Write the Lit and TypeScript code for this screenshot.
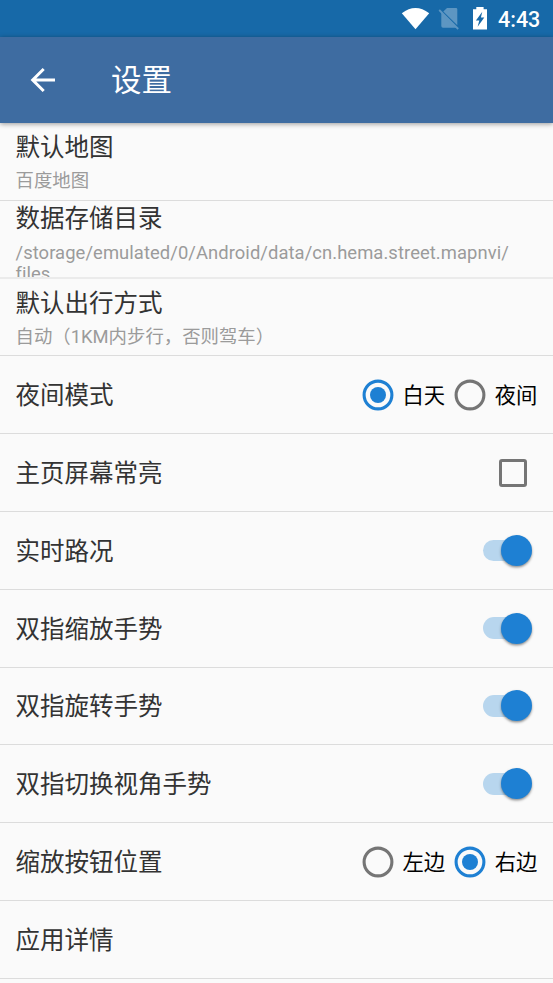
import { LitElement, html, css, svg } from "lit";
import { customElement, property } from "lit/decorators.js";

@customElement("radio-option")
class RadioOption extends LitElement {
  @property() label = "";
  @property({ type: Boolean }) checked = false;
  static styles = css`
    :host { display: flex; align-items: center; width: 92.3px; height: 48px; }
    .ring { width: 32px; height: 32px; flex: none; color: #757575; }
    .ring.on { color: #1e80d3; }
    .label { margin-left: 8.5px; padding-top: 2px; font-size: 21.3px; line-height: 32px; color: #000; white-space: nowrap; }
  `;
  render() {
    return html`<svg class="ring ${this.checked ? "on" : ""}" viewBox="0 0 32 32">
        <circle cx="16" cy="16" r="13.9" fill="none" stroke="currentColor" stroke-width="3.1"></circle>
        ${this.checked ? svg`<circle cx="16" cy="16" r="8" fill="currentColor"></circle>` : ""}
      </svg><span class="label">${this.label}</span>`;
  }
}

@customElement("toggle-switch")
class ToggleSwitch extends LitElement {
  static styles = css`
    :host { display: flex; align-items: center; width: 43.6px; height: 21.6px; margin-left: auto; margin-right: 26px;
      border-radius: 11px; background: #b8d6ee; justify-content: flex-end; }
    .thumb { width: 31px; height: 31px; flex: none; margin-right: -5.3px; border-radius: 50%; background: #1e80d3;
      box-shadow: 0 1.5px 2.5px rgba(0, 0, 0, .42); }
  `;
  render() {
    return html`<span class="thumb"></span>`;
  }
}

@customElement("setting-row")
class SettingRow extends LitElement {
  @property() label = "";
  @property() detail: unknown = "";
  @property({ type: Boolean }) long = false;
  static styles = css`
    :host { display: flex; box-sizing: border-box; height: 77.8px; flex: none; align-items: center;
      border-bottom: 1px solid #dcdcdc; overflow: hidden; }
    :host([long]) { border-bottom: 2px solid #ebebeb; }
    .text { flex: none; margin-left: 15.5px; padding-top: 3px; }
    .title { font-size: 24.5px; line-height: 36px; color: #333; white-space: nowrap; }
    .detail { font-size: 18.4px; line-height: 22px; margin-top: 4px; color: #9b9b9b; }
    .double { align-self: flex-start; padding-top: 7px; }
    .long { align-self: flex-start; padding-top: 0; width: 507px; }
    .long .detail { line-height: 21.6px; margin-top: 5px; white-space: nowrap; letter-spacing: .068px; }
  `;
  render() {
    const kind = this.long ? "long" : this.detail ? "double" : "";
    return html`<div class="text ${kind}">
        <div class="title">${this.label}</div>
        ${this.detail ? html`<div class="detail">${this.detail}</div>` : ""}
      </div><slot></slot>`;
  }
}

@customElement("app-root")
class AppRoot extends LitElement {
  static styles = css`
    :host { display: flex; flex-direction: column; width: 553px; height: 983px; overflow: hidden; background: #fafafa;
      font-family: Roboto, "Noto Sans CJK SC", sans-serif; }
    .status { height: 37px; flex: none; display: flex; align-items: center; justify-content: flex-end; background: #1769a8;
      color: #fff; box-sizing: border-box; padding-right: 13px; }
    .icons { width: 92px; height: 37px; margin-right: 5px; }
    .clock { width: 42px; font-size: 21.5px; line-height: 37px; padding-top: 2px; font-weight: 500; }
    .bar { height: 86px; flex: none; display: flex; align-items: center; background: #3e6ca1; color: #fff;
      position: relative; box-shadow: 0 1px 5px rgba(0, 0, 0, .4); }
    .back { width: 26px; height: 26px; margin-left: 30px; }
    .heading { margin-left: 55px; padding-top: 2px; font-size: 30.5px; line-height: 44px; }
    .list { display: flex; flex-direction: column; flex: none; }
    .options { display: flex; margin-left: auto; width: 191px; }
    .box { box-sizing: border-box; width: 28px; height: 28px; border: 3px solid #757575; border-radius: 3px;
      margin-left: auto; margin-right: 26px; }
  `;
  render() {
    return html`
      <div class="status">
        <svg class="icons" viewBox="401 0 92 37">
          <path d="M401.8 13.2Q415.5 2.6 429.2 13.2L415.5 29.3Z" fill="#fff"></path>
          <path d="M447 8H456Q457.3 8 457.3 9.3V25.2L443.3 11.5ZM441.3 12.4L456.7 27.8H443Q441.3 27.8 441.3 26.1Z" fill="#5d96c2"></path>
          <path d="M439.2 10L458.2 29" stroke="#5d96c2" stroke-width="1.8"></path>
          <path d="M473 9.2H476.3V7H483.6V9.2H487V29.6H473Z" fill="#fff"></path>
          <path d="M482.3 11.8L475.9 20.4H479.3L477.6 26.8L484.3 17.5H480.9Z" fill="#1769a8"></path>
        </svg>
        <span class="clock">4:43</span>
      </div>
      <div class="bar">
        <svg class="back" viewBox="0 0 26 26">
          <path d="M25 13H3M13.7 2L2.7 13L13.7 24" fill="none" stroke="#fff" stroke-width="3"></path>
        </svg>
        <span class="heading">设置</span>
      </div>
      <div class="list">
        <setting-row label="默认地图" detail="百度地图"></setting-row>
        <setting-row
          long
          label="数据存储目录"
          .detail=${html`/storage/emulated/0/Android/data/cn.hema.street.mapnvi/<br>files`}
        ></setting-row>
        <setting-row label="默认出行方式" detail="自动（1KM内步行，否则驾车）"></setting-row>
        <setting-row label="夜间模式">
          <div class="options">
            <radio-option checked label="白天"></radio-option>
            <radio-option label="夜间"></radio-option>
          </div>
        </setting-row>
        <setting-row label="主页屏幕常亮"><div class="box"></div></setting-row>
        ${["实时路况", "双指缩放手势", "双指旋转手势", "双指切换视角手势"].map(
          (label) => html`<setting-row label=${label}><toggle-switch></toggle-switch></setting-row>`
        )}
        <setting-row label="缩放按钮位置">
          <div class="options">
            <radio-option label="左边"></radio-option>
            <radio-option checked label="右边"></radio-option>
          </div>
        </setting-row>
        <setting-row label="应用详情"></setting-row>
      </div>
    `;
  }
}
